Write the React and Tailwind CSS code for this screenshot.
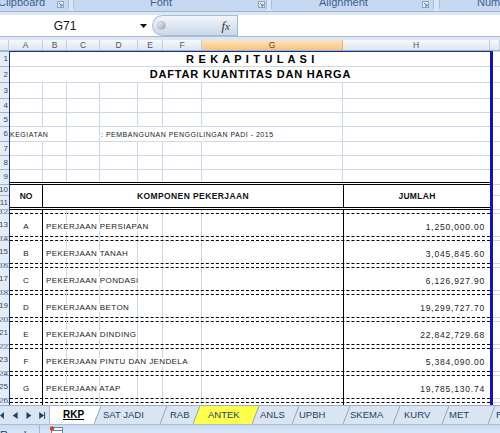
import React from 'react';

const W = ['w-[33px]', 'w-[24px]', 'w-[33px]', 'w-[38px]', 'w-[25px]', 'w-[39px]', 'w-[141px]', 'w-[147px]'];

const items = [
  ['A', 'PEKERJAAN PERSIAPAN', '1,250,000.00'],
  ['B', 'PEKERJAAN TANAH', '3,045,845.60'],
  ['C', 'PEKERJAAN PONDASI', '6,126,927.90'],
  ['D', 'PEKERJAAN BETON', '19,299,727.70'],
  ['E', 'PEKERJAAN DINDING', '22,842,729.68'],
  ['F', 'PEKERJAAN PINTU DAN JENDELA', '5,384,090.00'],
  ['G', 'PEKERJAAN ATAP', '19,785,130.74'],
];

// heights shared by the row header strip and the column I strip
const sideRows = [
  ['1', 'h-[15px]'], ['2', 'h-[16px]'], ['3', 'h-[16px]'], ['4', 'h-[14px]'], ['5', 'h-[14px]'],
  ['6', 'h-[15px]'], ['7', 'h-[14px]'], ['8', 'h-[14px]'], ['9', 'h-[15px]'], ['10', 'h-[11px]'],
  ['11', 'h-[14px]'],
];
for (let n = 12; n <= 28; n++) sideRows.push([String(n), n % 2 === 0 ? 'h-[4px]' : 'h-[23px]']);

const colHeads = [
  ['', 'w-[9px]'], ['A', 'w-[34px]'], ['B', 'w-[24px]'], ['C', 'w-[33px]'], ['D', 'w-[38px]'],
  ['E', 'w-[25px]'], ['F', 'w-[39px]'], ['G', 'w-[141px]'], ['H', 'w-[147px]'], ['', 'w-[10px]'],
];

const tabs = [
  { label: 'SAT JADI', w: 'w-[66px]', pl: 'pl-[2px]', left: '#ffffff' },
  { label: 'RAB', w: 'w-[33px]', pl: 'pl-[3px]' },
  { label: 'ANTEK', w: 'w-[59px]', pl: 'pl-[8px]', right: '#ffff4d', bg: 'bg-[#ffff4d]' },
  { label: 'ANLS', w: 'w-[40px]', pl: 'pl-[1px]', left: '#ffff4d' },
  { label: 'UPBH', w: 'w-[51px]', pl: 'pl-[0px]' },
  { label: 'SKEMA', w: 'w-[50px]', pl: 'pl-[0px]' },
  { label: 'KURV', w: 'w-[49px]', pl: 'pl-[4px]' },
  { label: 'MET', w: 'w-[46px]', pl: 'pl-[0px]' },
  { label: 'RK', w: 'w-[20px]', pl: 'pl-[1px]' },
];

function Launcher() {
  return (
    <svg width="7" height="7" viewBox="0 0 7 7" className="block shrink-0">
      <rect x="0.5" y="0.5" width="6" height="6" fill="#e3ecf7" stroke="#8aa3c6" />
      <path d="M2 2 L5 5 M5 3 V5 H3" stroke="#5a77a0" fill="none" />
    </svg>
  );
}

function Slash({ left, right }) {
  return (
    <svg width="7" height="18" viewBox="0 0 7 18" className="block shrink-0">
      {left && <polygon points="0,0 7,0 0,18" fill={left} />}
      {right && <polygon points="7,0 7,18 0,18" fill={right} />}
      <line x1="0" y1="18" x2="7" y2="0" stroke="#8ea6c6" strokeWidth="1" />
    </svg>
  );
}

function BlankRow({ h, last }) {
  return (
    <div className={`flex ${h} ${last ? '' : 'border-b border-[#d0d7e5]'}`}>
      {W.map((w, i) => (
        <div key={i} className={`${w} h-full shrink-0 ${i < 7 ? 'border-r border-[#d0d7e5]' : ''}`} />
      ))}
    </div>
  );
}

function TableRow({ thin, no, name, amount }) {
  return (
    <div className={`flex ${thin ? 'h-[4px]' : 'h-[23px]'} border-b border-dashed border-black`}>
      <div className="w-[33px] shrink-0 border-r border-black flex items-end justify-center pb-[5px] text-[8px] leading-none text-[#222]">
        {no}
      </div>
      <div className="w-[24px] shrink-0 border-r border-[#d0d7e5] flex items-end pb-[5px] whitespace-nowrap">
        {name && (
          <span className="relative z-10 bg-white pl-[3px] pr-[1px] text-[8px] leading-none tracking-[0.4px] text-[#222]">
            {name}
          </span>
        )}
      </div>
      <div className="w-[33px] shrink-0 border-r border-[#d0d7e5]" />
      <div className="w-[38px] shrink-0 border-r border-[#d0d7e5]" />
      <div className="w-[25px] shrink-0 border-r border-[#d0d7e5]" />
      <div className="w-[39px] shrink-0 border-r border-[#d0d7e5]" />
      <div className="w-[141px] shrink-0" />
      <div className="w-[147px] shrink-0 border-l border-black flex items-end justify-end pr-[5px] pb-[5px] text-[8.5px] leading-none tracking-[0.8px] text-[#222]">
        {amount}
      </div>
    </div>
  );
}

export default function App() {
  return (
    <div className="w-[500px] h-[433px] overflow-hidden bg-white flex flex-col" style={{ fontFamily: '"Liberation Sans", Arial, sans-serif' }}>
      {/* Ribbon group labels */}
      <div className="h-[12px] shrink-0 flex bg-[#dbe6f4] border-b border-[#9cb5d8] overflow-hidden">
        <div className="w-[72px] -ml-[3px] shrink-0 flex items-start bg-[#c6d9f0] rounded-br-[4px] border-r border-[#a7bfdf]">
          <span className="block pl-[1px] -mt-[4px] text-[11px] leading-[13px] text-[#3d5f90]">Clipboard</span>
          <span className="ml-[12px] mt-[1px]"><Launcher /></span>
        </div>
        <div className="w-[194px] ml-[4px] shrink-0 flex items-start bg-[#c6d9f0] rounded-b-[4px] border-x border-[#a7bfdf]">
          <span className="block pl-[76px] -mt-[4px] text-[11px] leading-[13px] text-[#3d5f90]">Font</span>
          <span className="ml-[86px] mt-[1px]"><Launcher /></span>
        </div>
        <div className="w-[163px] ml-[4px] shrink-0 flex items-start bg-[#c6d9f0] rounded-b-[4px] border-x border-[#a7bfdf]">
          <span className="block pl-[47px] -mt-[4px] text-[11px] leading-[13px] text-[#3d5f90]">Alignment</span>
          <span className="ml-[54px] mt-[1px]"><Launcher /></span>
        </div>
        <div className="flex-1 ml-[5px] flex items-start bg-[#c6d9f0] rounded-bl-[4px] border-l border-[#a7bfdf]">
          <span className="block pl-[37px] -mt-[4px] text-[11px] leading-[13px] text-[#3d5f90] whitespace-nowrap">Number</span>
        </div>
      </div>

      {/* Formula bar */}
      <div className="h-[28px] shrink-0 bg-[#dde7f4] pt-[3px]">
        <div className="h-[22px] flex bg-white border-b border-[#a9bcd4]">
          <div className="w-[152px] shrink-0 flex items-center">
            <span className="w-[130px] text-center text-[12px] text-[#111]">G71</span>
            <svg width="7" height="4" viewBox="0 0 7 4" className="ml-[10px]">
              <polygon points="0,0 7,0 3.5,4" fill="#111" />
            </svg>
          </div>
          <div className="w-[85px] shrink-0 flex items-center rounded-l-full border border-r-0 border-[#aabdd6] bg-linear-to-b from-[#f2f6fb] via-[#dfe7f2] to-[#c9d7ea]">
            <div className="ml-[4px] w-[9px] h-[9px] rounded-full bg-linear-to-br from-[#f4f4f4] to-[#9ea3ab] border border-[#b9bec6]" />
            <span className="ml-auto mr-[7px] text-[13px] italic text-[#333]" style={{ fontFamily: '"Liberation Serif", serif' }}>
              f<span className="text-[11px]">x</span>
            </span>
          </div>
          <div className="flex-1 border-l border-[#a3b7d3]" />
        </div>
      </div>

      {/* Column headers */}
      <div className="h-[11px] shrink-0 flex border-b border-[#9eb6ce]">
        {colHeads.map(([l, w], i) => (
          <div
            key={i}
            className={`${w} shrink-0 h-full flex items-center justify-center text-[8.5px] leading-none border-r ${
              l === 'G'
                ? 'bg-linear-to-b from-[#fde4bd] to-[#f7c47f] border-[#f0b35e] text-[#5a4a30]'
                : 'bg-linear-to-b from-[#f7f9fc] to-[#dde5f0] border-[#c2d0e2] text-[#555]'
            }`}
          >
            {l}
          </div>
        ))}
      </div>

      {/* Sheet body */}
      <div className="h-[354px] shrink-0 flex overflow-hidden">
        {/* Row headers */}
        <div className="w-[9px] shrink-0 border-t border-[#9eb6ce] bg-[#e4ecf7]">
          {sideRows.map(([n, h]) => (
            <div key={n} className={`${h} overflow-hidden flex items-center justify-end pr-[1px] border-b border-[#9eb6ce] text-[8px] leading-none text-[#3a4a60]`}>
              {n}
            </div>
          ))}
        </div>

        {/* Main sheet area A..H */}
        <div className="w-[484px] shrink-0 h-full border-l border-t border-[#1c2c82] border-r-[3px] border-r-[#1414b4]">
          <div className="h-[15px] border-b border-[#d0d7e5] flex items-center justify-center pl-[1px] text-[11px] font-bold tracking-[0.7px] text-black leading-none">
            R E K A P I T U L A S I
          </div>
          <div className="h-[16px] border-b border-[#d0d7e5] flex items-center justify-center pl-[1px] text-[11px] font-bold tracking-[0.8px] text-black leading-none">
            DAFTAR KUANTITAS DAN HARGA
          </div>
          <BlankRow h="h-[16px]" />
          <BlankRow h="h-[14px]" />
          <BlankRow h="h-[14px]" />
          <div className="h-[15px] flex border-b border-[#d0d7e5] text-[7px] leading-none tracking-[0.5px] text-[#222]">
            <div className="w-[57px] shrink-0 border-r border-[#d0d7e5] flex items-center">KEGIATAN</div>
            <div className="w-[33px] shrink-0 border-r border-[#d0d7e5]" />
            <div className="w-[243px] shrink-0 border-r border-[#d0d7e5] flex items-center pl-[1px] whitespace-nowrap">
              : PEMBANGUNAN PENGGILINGAN PADI - 2015
            </div>
            <div className="w-[147px] shrink-0" />
          </div>
          <BlankRow h="h-[14px]" />
          <BlankRow h="h-[14px]" />
          <BlankRow h="h-[12px]" last />

          {/* Table */}
          <div className="h-[28px] flex border-y-[3px] border-double border-black text-[8.5px] font-bold leading-none text-[#111]">
            <div className="w-[33px] shrink-0 border-r border-black flex items-center justify-center">NO</div>
            <div className="w-[300px] shrink-0 flex items-center justify-center tracking-[0.4px]">KOMPONEN PEKERJAAN</div>
            <div className="w-[147px] shrink-0 border-l border-black flex items-center justify-center tracking-[0.3px]">JUMLAH</div>
          </div>
          {items.map(([no, name, amount]) => (
            <React.Fragment key={no}>
              <TableRow thin />
              <TableRow no={no} name={name} amount={amount} />
            </React.Fragment>
          ))}
          <TableRow thin />
          <TableRow />
        </div>

        {/* Column I */}
        <div className="flex-1 border-t border-[#d0d7e5]">
          {sideRows.map(([n, h]) => (
            <div key={n} className={`${h} border-b border-[#d0d7e5]`} />
          ))}
        </div>
      </div>

      {/* Sheet tabs */}
      <div className="h-[19px] shrink-0 flex border-t border-[#9aafcc] bg-[#dbe5f2] text-[9.5px] leading-none text-[#1f3d6b] overflow-hidden">
        <div className="w-[50px] shrink-0 flex items-center border-r border-[#a9bcd6]">
          <svg width="50" height="9" viewBox="0 0 50 9" className="block">
            <rect x="-2" y="1" width="1" height="7" fill="#22406e" />
            <polygon points="4,1 4,8 0,4.5" fill="#22406e" />
            <polygon points="18,1 18,8 13,4.5" fill="#22406e" />
            <polygon points="27,1 27,8 32,4.5" fill="#22406e" />
            <polygon points="40,1 40,8 45,4.5" fill="#22406e" />
            <rect x="45" y="1" width="1" height="7" fill="#22406e" />
          </svg>
        </div>
        <div className="w-[44px] shrink-0 bg-white flex items-center pl-[13px] font-bold underline text-black text-[10px]">
          RKP
        </div>
        {tabs.map((t) => (
          <div key={t.label} className={`${t.w} shrink-0 flex items-center`}>
            <Slash left={t.left} right={t.right} />
            <div className={`flex-1 h-full flex items-center whitespace-nowrap ${t.pl} ${t.bg || ''}`}>{t.label}</div>
          </div>
        ))}
      </div>

      {/* Status bar */}
      <div className="h-[9px] shrink-0 flex border-t border-[#a7bcd9] bg-linear-to-b from-[#c9dbf1] to-[#d9e6f6] overflow-hidden">
        <div className="w-[40px] shrink-0 border-r border-[#9fb4d2] pt-[5px] text-[11px] leading-[11px] text-[#1f3d6b]">Ready</div>
        <div className="ml-[9px] mt-[1px]">
          <svg width="14" height="10" viewBox="0 0 14 10" className="block">
            <rect x="2.5" y="1.5" width="11" height="9" fill="#ffffff" stroke="#6b86ad" />
            <line x1="3" y1="4.5" x2="13" y2="4.5" stroke="#6b86ad" />
            <line x1="3" y1="7.5" x2="13" y2="7.5" stroke="#6b86ad" />
            <circle cx="3" cy="2.5" r="2.2" fill="#e23b2e" />
          </svg>
        </div>
      </div>
    </div>
  );
}
